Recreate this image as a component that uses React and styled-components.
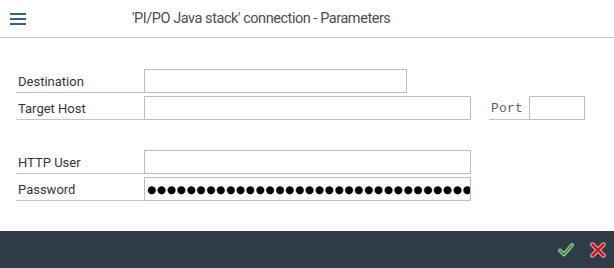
import React from "react";
import styled, { createGlobalStyle } from "styled-components";

const Global = createGlobalStyle`
  html, body { margin: 0; padding: 0; background: #fff; }
  body { font-family: Roboto, "Noto Sans", Arial, sans-serif; }
`;

const Page = styled.div`
  width: 614px;
  height: 268px;
  display: flex;
  flex-direction: column;
  overflow: hidden;
`;

const Header = styled.header`
  height: 37px;
  border-bottom: 1px solid #c4c4c4;
  display: flex;
  align-items: center;
  flex-shrink: 0;
`;

const MenuButton = styled.div`
  width: 16px;
  margin-left: 10px;
  display: flex;
  flex-direction: column;
  gap: 3px;
`;

const MenuBar = styled.span`
  display: block;
  height: 2px;
  background: #346187;
`;

const Title = styled.h1`
  margin: 0 0 0 106px;
  font-size: 14.5px;
  font-weight: 400;
  color: #4a4e53;
  letter-spacing: -0.45px;
`;

const Body = styled.main`
  flex: 1;
  padding: 31px 0 0 16px;
  display: flex;
  flex-direction: column;
`;

const Group = styled.div`
  display: flex;
  flex-direction: column;
  gap: 3px;
  margin-bottom: ${(p) => p.$after || 0}px;
`;

const Row = styled.div`
  display: flex;
  align-items: stretch;
  height: 24px;
`;

const Label = styled.label`
  width: 128px;
  padding-left: 2px;
  border-bottom: 1px solid #c4c4c4;
  font-size: 13px;
  color: #32363a;
  display: flex;
  align-items: center;
  padding-top: 2px;
  box-sizing: border-box;
`;

const MonoLabel = styled(Label)`
  width: 40px;
  margin-left: 18px;
  font-family: "Liberation Mono", "DejaVu Sans Mono", monospace;
  color: #5b5f63;
  letter-spacing: 0.2px;
`;

const Field = styled.div`
  width: ${(p) => p.$w}px;
  box-sizing: border-box;
  border: 1px solid #bdbdbd;
  background: #fff;
  overflow: hidden;
  white-space: nowrap;
  display: flex;
  align-items: center;
`;

const Dots = styled.span`
  font-family: "DejaVu Sans", sans-serif;
  font-size: 10.5px;
  line-height: 14px;
  color: #000;
  padding-left: 2px;
  letter-spacing: 0.7px;
`;

const Footer = styled.footer`
  height: 37px;
  background: #2f3b46;
  display: flex;
  justify-content: flex-end;
  align-items: center;
  gap: 16px;
  padding-right: 8px;
  flex-shrink: 0;
`;

const IconBtn = styled.span`
  width: 16px;
  height: 16px;
  display: flex;
  align-items: center;
  justify-content: center;
`;

const Check = () => (
  <svg width="16" height="16" viewBox="0 0 16 16">
    <path d="M2 8.5 L6 12.5 L14 3" fill="none" stroke="#cfe7c9" strokeWidth="3.6" strokeLinecap="round" strokeLinejoin="round" />
    <path d="M2 8.5 L6 12.5 L14 3" fill="none" stroke="#3a9b3a" strokeWidth="2.2" strokeLinecap="round" strokeLinejoin="round" />
  </svg>
);

const Cross = () => (
  <svg width="16" height="16" viewBox="0 0 16 16">
    <path d="M2.5 2.5 L13.5 13.5 M13.5 2.5 L2.5 13.5" fill="none" stroke="#f2d6d6" strokeWidth="4.4" strokeLinecap="round" />
    <path d="M2.5 2.5 L13.5 13.5 M13.5 2.5 L2.5 13.5" fill="none" stroke="#d3121b" strokeWidth="2.8" strokeLinecap="round" />
  </svg>
);

export default function App() {
  const dots = "●".repeat(40);
  return (
    <Page>
      <Global />
      <Header>
        <MenuButton>
          <MenuBar />
          <MenuBar />
          <MenuBar />
        </MenuButton>
        <Title>'PI/PO Java stack' connection - Parameters</Title>
      </Header>
      <Body>
        <Group $after={30}>
          <Row>
            <Label>Destination</Label>
            <Field $w={263} />
          </Row>
          <Row>
            <Label>Target Host</Label>
            <Field $w={327} />
            <MonoLabel>Port</MonoLabel>
            <Field $w={56} />
          </Row>
        </Group>
        <Group>
          <Row>
            <Label>HTTP User</Label>
            <Field $w={327} />
          </Row>
          <Row>
            <Label>Password</Label>
            <Field $w={327}>
              <Dots>{dots}</Dots>
            </Field>
          </Row>
        </Group>
      </Body>
      <Footer>
        <IconBtn><Check /></IconBtn>
        <IconBtn><Cross /></IconBtn>
      </Footer>
    </Page>
  );
}
